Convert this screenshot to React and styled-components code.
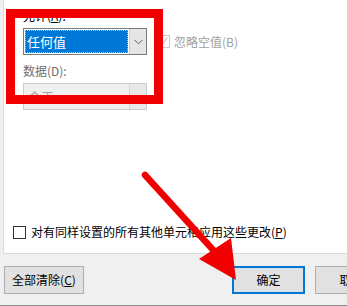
import React from 'react';
import styled, { createGlobalStyle } from 'styled-components';

const GlobalStyle = createGlobalStyle`
  html, body {
    margin: 0;
    padding: 0;
    background: #f0f0f0;
  }
  * {
    box-sizing: border-box;
  }
`;

const Chevron = ({ color = '#5f5f5f' }) => (
  <svg width="9" height="6" viewBox="0 0 9 6">
    <polyline points="0.5,0.8 4.5,4.8 8.5,0.8" fill="none" stroke={color} strokeWidth="1" />
  </svg>
);

const Check = () => (
  <svg width="11" height="11" viewBox="0 0 11 11">
    <polyline points="1.5,5.5 4,8.5 9.5,1.5" fill="none" stroke="#c4c4c4" strokeWidth="1.2" />
  </svg>
);

const ComboBox = ({ value, disabled }) => (
  <Combo disabled={disabled}>
    <ComboValue disabled={disabled}>
      <Selection disabled={disabled}>{value}</Selection>
    </ComboValue>
    <DropButton disabled={disabled}>
      <Chevron color={disabled ? '#a8a8a8' : '#5f5f5f'} />
    </DropButton>
  </Combo>
);

const App = () => (
  <>
    <GlobalStyle />
    <Dialog>
      <Panel>
        <Fields>
          <Label>
            允许(<u>A</u>):
          </Label>
          <FieldRow>
            <ComboBox value="任何值" />
            <CheckOption disabled>
              <CheckBox disabled>
                <Check />
              </CheckBox>
              <span>忽略空值(B)</span>
            </CheckOption>
          </FieldRow>
          <Label disabled>数据(D):</Label>
          <FieldRow>
            <ComboBox value="介于" disabled />
          </FieldRow>
        </Fields>
        <ApplyRow>
          <CheckBox />
          <span>
            对有同样设置的所有其他单元格应用这些更改(<u>P</u>)
          </span>
        </ApplyRow>
      </Panel>
      <Footer>
        <Button>
          全部清除(<u>C</u>)
        </Button>
        <ButtonGroup>
          <Button primary>确定</Button>
          <Button>取消</Button>
        </ButtonGroup>
      </Footer>

      <Highlight />
      <ArrowLayer viewBox="0 0 347 306" width="347" height="306">
        <line x1="145" y1="175" x2="215" y2="252" stroke="#f00000" strokeWidth="6.5" strokeLinecap="round" />
        <polygon points="199,259 231,238 236,280" fill="#f00000" />
      </ArrowLayer>
    </Dialog>
  </>
);

export default App;

const Dialog = styled.div`
  position: relative;
  width: 347px;
  height: 306px;
  overflow: hidden;
  display: flex;
  flex-direction: column;
  background: #f0f0f0;
  border-bottom: 1px solid #8a8a8a;
  font-family: "Noto Sans CJK SC", "Noto Sans", sans-serif;
  font-size: 12px;
  color: #000;
`;

const Panel = styled.div`
  height: 254px;
  margin-left: 3px;
  width: 360px;
  display: flex;
  flex-direction: column;
  padding: 0 0 14px 9px;
  background: #fff;
  border-left: 1px solid #dadada;
  border-bottom: 1px solid #dadada;
`;

const Fields = styled.div`
  display: flex;
  flex-direction: column;
  padding: 9px 0 0 10px;
`;

const Label = styled.div`
  height: 14px;
  line-height: 14px;
  margin-bottom: 5px;
  color: ${({ disabled }) => (disabled ? '#6d6d6d' : '#000')};
`;

const FieldRow = styled.div`
  display: flex;
  align-items: center;
  margin-bottom: 9px;
`;

const Combo = styled.div`
  display: flex;
  width: 124px;
  height: 27px;
  padding: 1px;
  border: 1px solid ${({ disabled }) => (disabled ? '#cccccc' : '#7a7a7a')};
  background: ${({ disabled }) => (disabled ? '#f0f0f0' : '#fff')};
`;

const ComboValue = styled.div`
  flex: 1;
  display: flex;
  padding: ${({ disabled }) => (disabled ? '0 1px' : '0')};
`;

const Selection = styled.div`
  flex: 1;
  display: flex;
  align-items: center;
  padding-left: 2px;
  font-size: 13px;
  line-height: 15px;
  background: ${({ disabled }) => (disabled ? 'transparent' : '#0078d7')};
  color: ${({ disabled }) => (disabled ? '#a0a0a0' : '#fff')};
  outline: ${({ disabled }) => (disabled ? 'none' : '1px dotted #8fc3ee')};
  outline-offset: -1px;
`;

const DropButton = styled.div`
  width: 17px;
  display: flex;
  align-items: center;
  justify-content: center;
  margin: -1px -1px -1px 1px;
  background: ${({ disabled }) => (disabled ? '#e8e8e8' : '#e5e5e5')};
  border-left: 1px solid ${({ disabled }) => (disabled ? '#d6d6d6' : '#cfcfcf')};
`;

const CheckOption = styled.label`
  display: flex;
  align-items: center;
  gap: 4px;
  margin-left: 10px;
  color: ${({ disabled }) => (disabled ? '#a0a0a0' : '#000')};
  line-height: 14px;
`;

const CheckBox = styled.span`
  width: 13px;
  height: 13px;
  display: flex;
  align-items: center;
  justify-content: center;
  background: #fff;
  border: 1px solid ${({ disabled }) => (disabled ? '#cccccc' : '#333333')};
`;

const ApplyRow = styled.label`
  margin-top: auto;
  display: flex;
  align-items: center;
  gap: 5px;
  line-height: 14px;
`;

const Footer = styled.div`
  flex: 1;
  display: flex;
  align-items: flex-start;
  width: 398px;
  padding: 12px 10px 0 4px;
`;

const ButtonGroup = styled.div`
  display: flex;
  gap: 10px;
  margin-left: auto;
`;

const Button = styled.button`
  width: ${({ primary }) => (primary ? '73px' : '80px')};
  height: 28px;
  padding: 0;
  font-family: inherit;
  font-size: 12px;
  line-height: 14px;
  color: #000;
  background: #e1e1e1;
  border: ${({ primary }) => (primary ? '2px solid #0078d7' : '1px solid #adadad')};

  &:last-child:not(:first-child) {
    width: 73px;
  }
`;

const Highlight = styled.div`
  position: absolute;
  left: 6px;
  top: 9px;
  width: 157px;
  height: 95px;
  border: 9px solid #f00000;
  pointer-events: none;
`;

const ArrowLayer = styled.svg`
  position: absolute;
  left: 0;
  top: 0;
  pointer-events: none;
`;
